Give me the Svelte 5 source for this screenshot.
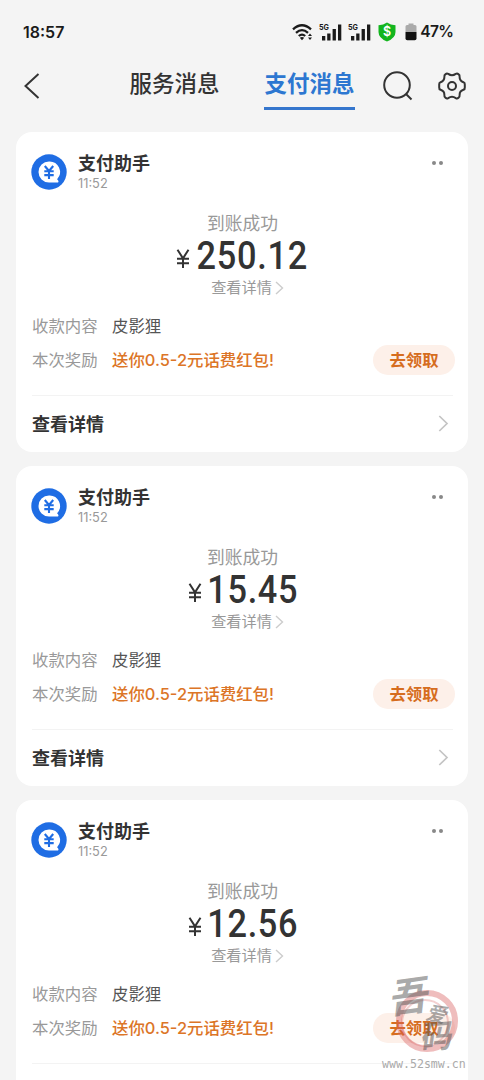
<script>
  const messages = [
    { id: 1, time: '11:52', amount: '250.12', payer: '皮影狸' },
    { id: 2, time: '11:52', amount: '15.45', payer: '皮影狸' },
    { id: 3, time: '11:52', amount: '12.56', payer: '皮影狸' }
  ];

  const tabs = ['服务消息', '支付消息'];
  let active = $state('支付消息');
</script>

{#snippet signal()}
  <svg class="signal" width="25" height="20" viewBox="0 0 25 20">
    <text x="0" y="7.500" font-size="8" textLength="10" lengthAdjust="spacingAndGlyphs">5G</text>
    <path d="M3 14h3.300v4.500H3zM8.200 11.500h3.300v7H8.200zM13.600 7h3.300v11.500h-3.300zM19 2.500h3.300v16H19z" />
  </svg>
{/snippet}

<main>
  <div class="status">
    <span class="clock">18:57</span>
    <div class="indicators">
      <svg class="wifi" width="22" height="18" viewBox="0 0 22 18">
        <g fill="none" stroke="#1b1b1b" stroke-width="2.300">
          <path d="M1 6.300Q10 -1.900 19 6.300" />
          <path d="M4 9.800Q10 4.400 16 9.800" />
          <path d="M6.800 13Q10 10.200 13.200 13" />
        </g>
        <path d="M10 17.200L7.800 14.800Q10 13.200 12.200 14.800zM16 13l2-2.500 2 2.500zM16 14.500h4L18 17z" fill="#1b1b1b" />
      </svg>
      {@render signal()}
      {@render signal()}
      <svg class="shield" width="18" height="20" viewBox="0 0 18 20">
        <path d="M9 .5Q12.500 3 17.500 3.200V10q0 6.200-8.500 9.500Q.5 16.200.5 10V3.200Q5.500 3 9 .5z" fill="#13b51e" />
        <text x="9" y="14.300" text-anchor="middle" font-size="12.500" font-weight="600" fill="#fff">$</text>
      </svg>
      <svg class="battery" width="12" height="18" viewBox="0 0 12 18">
        <path d="M3.500.500h5V2H10q1.500 0 1.500 1.500V9H.5V3.500Q.5 2 2 2h1.500z" fill="#aaa" />
        <path d="M.5 9h11v6.500q0 1.800-1.800 1.800H2.300Q.5 17.300.5 15.500z" fill="#111" />
      </svg>
      <span class="percent">47%</span>
    </div>
  </div>

  <header>
    <svg class="back" width="18" height="28" viewBox="0 0 18 28">
      <path d="M15.500 2L2.500 14l13 12" />
    </svg>
    <nav>
      {#each tabs as tab (tab)}
        <button class:active={tab === active} onclick={() => (active = tab)}>{tab}</button>
      {/each}
    </nav>
    <svg class="search" width="32" height="32" viewBox="0 0 32 32">
      <circle cx="15" cy="15" r="12.800" />
      <path d="M24 24l5.500 5.500" />
    </svg>
    <svg class="gear" width="30" height="30" viewBox="0 0 30 30">
      <path d="M8.600 3.200Q9.800 2 11.200 2.900Q15 5.600 18.800 2.900Q20.200 2 21.400 3.200Q22.900 4.200 22.600 5.800Q22.500 10 26.400 11.200Q28 11.900 27.800 13.500V16.500Q28 18.100 26.400 18.800Q22.500 20 22.600 24.200Q22.900 25.800 21.400 26.800Q20.200 28 18.800 27.100Q15 24.400 11.200 27.100Q9.800 28 8.600 26.800Q7.100 25.800 7.400 24.200Q7.500 20 3.600 18.800Q2 18.100 2.200 16.500V13.500Q2 11.900 3.600 11.200Q7.500 10 7.400 5.800Q7.100 4.200 8.600 3.200z" />
      <circle cx="15" cy="15" r="4" />
    </svg>
  </header>

  <section class="list">
    {#each messages as message (message.id)}
      <article>
        <div class="head">
          <svg class="avatar" width="36" height="36" viewBox="0 0 36 36">
            <circle cx="18" cy="18" r="17.700" fill="#1f6de4" />
            <path d="M18 7.500a10.500 10.500 0 1 0 0 21h9q1.300-1.200-.900-3.300A10.500 10.500 0 0 0 18 7.500z" fill="#fff" />
            <path d="M13.800 12l4.200 5 4.200-5M18 17V25M13.300 17.300h9.400M13.300 21.100h9.400" fill="none" stroke="#1f6de4" stroke-width="2.100" />
          </svg>
          <div class="who">
            <h2>支付助手</h2>
            <time>{message.time}</time>
          </div>
          <div class="more"><i></i><i></i></div>
        </div>

        <div class="summary">
          <p class="state">到账成功</p>
          <p class="amount">
            <svg width="14" height="19" viewBox="0 0 14 19">
              <path d="M1.500.800L7 9.300 12.500.800M7 9.300V19M1 9.800h12M1 14.300h12" />
            </svg>
            <span>{message.amount}</span>
          </p>
          <p class="link">
            查看详情
            <svg width="9" height="14" viewBox="0 0 9 14"><path d="M1 1l6.500 6L1 13" /></svg>
          </p>
        </div>

        <dl>
          <div class="row">
            <dt>收款内容</dt>
            <dd>{message.payer}</dd>
          </div>
          <div class="row">
            <dt>本次奖励</dt>
            <dd class="reward">送你<b>0.5-2</b>元话费红包!</dd>
            <button class="claim">去领取</button>
          </div>
        </dl>

        <div class="foot">
          <span>查看详情</span>
          <svg width="11" height="17" viewBox="0 0 11 17"><path d="M1.300 1l7.700 7.500L1.300 16" /></svg>
        </div>
      </article>
    {/each}
  </section>

  <div class="watermark">
    <svg width="88" height="84" viewBox="0 0 88 84">
      <circle cx="47" cy="51" r="28" fill="none" stroke="#d85b5b" stroke-opacity=".4" stroke-width="6" />
      <circle cx="45" cy="53" r="23" fill="none" stroke="#d85b5b" stroke-opacity=".28" stroke-width="2" />
      <g class="brush">
        <text transform="translate(9 44) rotate(-8) skewX(-14)" font-size="40">吾</text>
        <text transform="translate(45 49) rotate(12) skewX(-12)" font-size="20">爱</text>
        <text transform="translate(40 79) rotate(-4) skewX(-12)" font-size="32">码</text>
      </g>
    </svg>
    <span>www.52smw.cn</span>
  </div>
</main>

<style>
  :global(body) {
    background: #f4f4f4;
    overflow: hidden;
  }
  main {
    position: relative;
    width: 484px;
    height: 1080px;
    overflow: hidden;
    background: #f4f4f4;
    color: #333;
    font-family: Inter, 'Noto Sans CJK SC', sans-serif;
  }
  p, h2, dl, dd {
    margin: 0;
  }
  button {
    border: 0;
    padding: 0;
    background: none;
    font-family: inherit;
  }
  .status {
    display: flex;
    justify-content: space-between;
    align-items: center;
    height: 62px;
    padding: 1px 31px 0 23px;
    box-sizing: border-box;
    color: #1b1b1b;
  }
  .clock, .percent {
    font-size: 16px;
    font-weight: 600;
  }
  .percent {
    font-size: 15.6px;
    letter-spacing: -0.8px;
  }
  .indicators {
    display: flex;
    align-items: center;
  }
  .wifi {
    margin-right: 5px;
  }
  .signal {
    margin-right: 4px;
    fill: #1b1b1b;
    font-weight: 700;
  }
  .shield {
    margin-left: 1px;
    margin-right: 9px;
  }
  .battery {
    margin-right: 3px;
  }
  header {
    display: flex;
    align-items: center;
    height: 48px;
    padding: 0 16px 0 23px;
  }
  .back, .search, .gear {
    fill: none;
    stroke: #333;
    stroke-width: 2;
  }
  .back {
    margin-right: 88px;
  }
  nav {
    display: flex;
    align-self: stretch;
    gap: 44px;
    margin-right: 27px;
  }
  nav button {
    width: 91px;
    padding-bottom: 6px;
    border-bottom: 3px solid transparent;
    color: #333;
    font-size: 22.5px;
    font-weight: 500;
    white-space: nowrap;
  }
  nav .active {
    border-color: #3576cd;
    color: #2d77d1;
    font-weight: 700;
  }
  .search {
    margin-right: 23px;
  }
  .list {
    display: flex;
    flex-direction: column;
    gap: 14px;
    padding: 22px 16px 0;
  }
  article {
    box-sizing: border-box;
    flex: none;
    height: 320px;
    padding: 20px 15px 0 16px;
    border-radius: 16px;
    background: #fff;
  }
  .head {
    display: flex;
    height: 60px;
  }
  .avatar {
    margin-top: 2px;
    margin-right: 11px;
    margin-left: -1px;
  }
  h2 {
    font-size: 18px;
    line-height: 24px;
    font-weight: 700;
  }
  time {
    display: block;
    color: #999;
    font-size: 12.8px;
    line-height: 16px;
  }
  .more {
    display: flex;
    gap: 3px;
    margin: 9px 10px 0 auto;
  }
  .more i {
    width: 4px;
    height: 4px;
    border-radius: 50%;
    background: #888;
  }
  .summary {
    display: flex;
    flex-direction: column;
    align-items: center;
    height: 97.5px;
  }
  .state {
    color: #999;
    font-size: 17.8px;
    line-height: 24px;
  }
  .amount {
    display: flex;
    align-items: center;
    height: 40px;
    color: #333;
    font-family: Roboto, sans-serif;
    font-size: 39px;
    font-weight: 500;
    line-height: 40px;
    letter-spacing: 0.8px;
  }
  .amount span {
    margin: 0 -7px;
    transform: scaleX(0.88);
  }
  .amount svg {
    margin-top: 4px;
    margin-right: 6px;
    fill: none;
    stroke: #333;
    stroke-width: 2;
  }
  .link {
    display: flex;
    align-items: center;
    gap: 3px;
    margin-left: 10px;
    color: #999;
    font-size: 15.2px;
    line-height: 24px;
  }
  .link svg {
    fill: none;
    stroke: #ccc;
    stroke-width: 1.4;
  }
  .row {
    display: flex;
    align-items: center;
    height: 33.5px;
    font-size: 16.4px;
    line-height: 24px;
  }
  dt {
    width: 80px;
    color: #999;
  }
  dd {
    color: #555;
  }
  .reward {
    color: #dc7527;
    font-weight: 500;
  }
  .reward b {
    font-weight: 500;
  }
  .claim {
    width: 82px;
    height: 30px;
    margin-left: auto;
    margin-right: -2px;
    padding-bottom: 2px;
    border-radius: 15px;
    background: #fdf0e9;
    color: #d66d1e;
    font-size: 16.4px;
    font-weight: 700;
  }
  .foot {
    display: flex;
    align-items: center;
    justify-content: space-between;
    height: 54px;
    margin-top: 18.5px;
    padding-right: 4px;
    border-top: 1px solid #f3f3f3;
    font-size: 18px;
    font-weight: 700;
  }
  .foot svg {
    fill: none;
    stroke: #c4c4c4;
    stroke-width: 1.7;
  }
  .watermark {
    position: absolute;
    left: 380px;
    top: 970px;
    width: 88px;
  }
  .watermark svg {
    display: block;
    overflow: visible;
  }
  .brush {
    fill: #555;
    fill-opacity: 0.5;
    font-family: 'Noto Sans CJK SC', sans-serif;
    font-weight: 700;
  }
  .watermark span {
    display: block;
    margin-top: 3px;
    margin-left: 2px;
    color: #aaa;
    font-family: 'DejaVu Sans Mono', monospace;
    font-size: 11.6px;
    line-height: 14px;
  }
</style>
